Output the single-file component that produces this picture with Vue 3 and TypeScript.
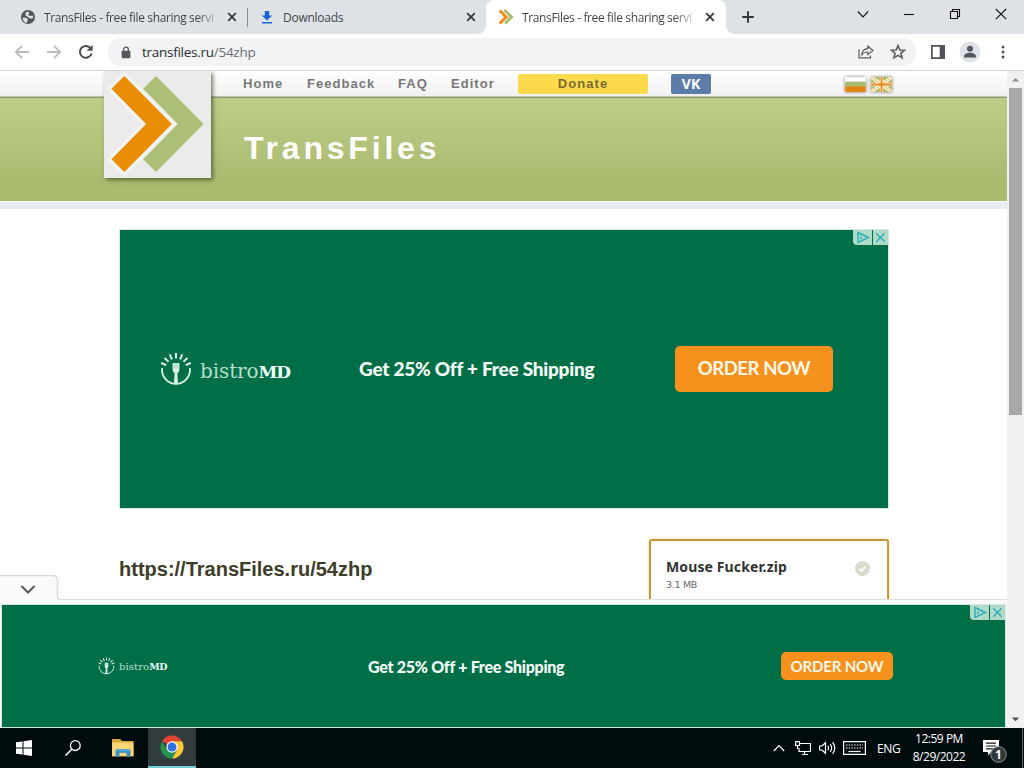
<script setup lang="ts">
interface Tab {
  title: string
  icon: 'globe' | 'download' | 'trans'
  kind: string
}

const tabs: Tab[] = [
  { title: 'TransFiles - free file sharing servi', icon: 'globe', kind: 'first' },
  { title: 'Downloads', icon: 'download', kind: 'second' },
  { title: 'TransFiles - free file sharing servi', icon: 'trans', kind: 'active' },
]

const ads = [
  { id: 'large', text: 'Get 25% Off + Free Shipping' },
  { id: 'small', text: 'Get 25% Off + Free Shipping' },
]

const rays = [-68, -46, -23, 0, 23, 46, 68]
</script>

<template>
  <div class="screen">
    <header class="tabstrip">
      <div v-for="(tab, i) in tabs" :key="i" class="tab" :class="tab.kind">
        <svg v-if="tab.icon === 'globe'" class="fav" viewBox="0 0 16 16">
          <circle cx="8" cy="8" r="7" fill="#505559" />
          <path d="M2.6 8.4 6 8.8 8 10.4 7.2 12.2 7 14C4.400 13.500 2.600 11.500 2.600 8.400Z M5.600 3.600 8.500 2.600 9.300 4 8.200 5.600 9.800 7 12.400 6.600 13.600 8.500 11.500 9.800 9 8.900 7 7.200 5.400 6.500Z" fill="#dee1e6" />
        </svg>
        <svg v-else-if="tab.icon === 'download'" class="fav" viewBox="0 0 16 16">
          <path d="M5.800 2h4.400v4.500H13.200L8 11.500 2.800 6.500h3zM3 13h10v1.500H3z" fill="#1a66d8" />
        </svg>
        <svg v-else class="fav" viewBox="0 0 16 16">
          <path d="M6 .6 8 .6 15.800 8 8 15.400 6 13.500 11.500 8 6 2.500z" fill="#a9bf70" />
          <path d="M.6 2.600 2.800.6 10.300 8 2.800 15.400.6 13.400 6 8z" fill="#f08a1c" />
        </svg>
        <span class="tab-title" :class="{ fade: tab.kind !== 'second' }">{{ tab.title }}</span>
        <svg class="close" viewBox="0 0 10 10"><path d="M1.200 1.200 8.800 8.800M8.800 1.200 1.200 8.800" /></svg>
      </div>
      <svg class="plus" viewBox="0 0 14 14"><path d="M7 1.200v11.600M1.200 7h11.600" /></svg>
      <div class="winctl">
        <svg viewBox="0 0 12 12"><path d="M.8 3.500 6 9l5.200-5.500" /></svg>
        <svg viewBox="0 0 12 12"><path d="M1 6.500h10" /></svg>
        <svg viewBox="0 0 12 12"><path d="M1.500 3.500h7v7h-7zM3.500 3.500v-2h7v7h-2" /></svg>
        <svg viewBox="0 0 12 12"><path d="M.8 1 11.200 11.200M11.200 1 .8 11.200" /></svg>
      </div>
    </header>

    <div class="toolbar">
      <svg class="nav" viewBox="0 0 16 16"><path d="M15 8H2M8 1.800 1.800 8 8 14.200" /></svg>
      <svg class="nav" viewBox="0 0 16 16"><path d="M1 8h13M8 1.800 14.200 8 8 14.200" /></svg>
      <svg class="nav reload" viewBox="0 0 16 16">
        <path d="M13.500 9.500A5.900 5.900 0 1 1 12.300 4" /><path class="solid" d="M14.600.8v6H8.600z" />
      </svg>
      <div class="omnibox">
        <svg class="lock" viewBox="0 0 10 13">
          <path d="M2.600 5.500V3.600a2.400 2.400 0 0 1 4.800 0v1.900" fill="none" stroke="#54585c" stroke-width="1.300" />
          <rect x=".6" y="4.700" width="8.800" height="7.600" rx="1" fill="#54585c" />
        </svg>
        <span class="url">transfiles.ru<span class="path">/54zhp</span></span>
        <svg class="share" viewBox="0 0 16 16">
          <path d="M1 5.200V13.800H12.500V11.500M3.800 10.600C4.200 6.800 6.500 4.800 9.800 4.700V2L15 6.500 9.800 10.600V8C7.200 7.900 5.300 8.800 3.800 10.600Z" />
        </svg>
        <svg class="star" viewBox="0 0 16 16">
          <path d="M8 1.600 9.800 6 14.500 6.300 10.900 9.300 12.100 13.900 8 11.400 3.900 13.900 5.100 9.300 1.500 6.300 6.200 6Z" />
        </svg>
      </div>
      <svg class="panel" viewBox="0 0 14 14"><path d="M0 0h14v14H0zM1.700 1.700v10.600h7V1.700z" fill-rule="evenodd" /></svg>
      <svg class="avatar" viewBox="0 0 22 22">
        <circle cx="11" cy="11" r="10.500" fill="#dfe3e8" />
        <circle cx="11" cy="7.800" r="3" fill="#50565d" />
        <path d="M5 16.500v-1.200c0-2.200 3.500-3.500 6-3.500s6 1.300 6 3.500v1.200z" fill="#50565d" />
      </svg>
      <svg class="dots" viewBox="0 0 4 14"><circle cx="2" cy="2" r="1.500" /><circle cx="2" cy="7" r="1.500" /><circle cx="2" cy="12" r="1.500" /></svg>
    </div>

    <div class="body">
      <main class="page">
        <nav class="menu">
          <a class="m-home">Home</a><a class="m-feed">Feedback</a><a class="m-faq">FAQ</a><a class="m-edit">Editor</a>
          <a class="donate">Donate</a>
          <a class="vk">VK</a>
          <svg class="flag ru" viewBox="0 0 22 16"><rect width="22" height="5.500" fill="#fff" /><rect y="5" width="22" height="5.500" fill="#a9b96c" /><rect y="10" width="22" height="6" fill="#e28412" /></svg>
          <svg class="flag" viewBox="0 0 22 16">
            <rect width="22" height="16" fill="#abb965" />
            <path d="M0 0 22 16M22 0 0 16M11 0V16M0 8H22" stroke="#fff4d8" stroke-width="3.600" />
            <path d="M0 0 22 16M22 0 0 16" stroke="#d9a04d" stroke-width=".8" />
            <path d="M11 0V16M0 8H22" stroke="#e78a20" stroke-width="1.900" />
          </svg>
        </nav>
        <div class="banner"><h1>TransFiles</h1></div>
        <div class="logo">
          <svg viewBox="0 0 107 107">
            <path d="M39 18 52 5 100 53.500 52 102 39 89 74 53.500z" fill="#adbf75" />
            <path d="M7 18 20 5 68 53.500 20 102 7 89 42 53.500z" fill="#f2f2ef" stroke="#f2f2ef" stroke-width="7" />
            <path d="M7 18 20 5 68 53.500 20 102 7 89 42 53.500z" fill="#e98d04" />
          </svg>
        </div>
        <div class="content">
          <h2>https://TransFiles.ru/54zhp</h2>
          <div class="file">
            <div>
              <div class="file-name">Mouse Fucker.zip</div>
              <div class="file-size">3.1 MB</div>
            </div>
            <svg viewBox="0 0 14 14"><circle cx="7" cy="7" r="7" fill="#d9dbca" /><path d="m4.200 7.200 2 2.100L10 5" fill="none" stroke="#fff" stroke-width="1.700" /></svg>
          </div>
        </div>
        <div class="anchor-bar">
          <svg viewBox="0 0 60 26">
            <path d="M0 26V.5H52.500Q57.500.5 57.500 5.500V21Q57.500 24.500 60 24.500V26z" fill="#fafafa" />
            <path d="M0 .5H52.500Q57.500.5 57.500 5.500V21Q57.500 24.500 60 24.500" fill="none" stroke="#d9d9da" stroke-width="1.400" />
            <path d="M21.500 11 28 17.500 34.500 11" fill="none" stroke="#555" stroke-width="2" />
          </svg>
        </div>
        <section v-for="ad in ads" :key="ad.id" class="ad" :class="ad.id">
          <div class="brand">
            <svg viewBox="0 0 32 34">
              <path d="M2.100 16.200A14 14 0 1 0 29.900 16.200" fill="none" stroke="#d9f3e5" stroke-width="1.800" />
              <path v-for="r in rays" :key="r" d="M16 1V6.500" :transform="`rotate(${r} 16 17)`" stroke="#e8faef" stroke-width="2" />
              <path d="M12.600 11h6.800v6.500q0 2.500-2 3.700L18 32h-4l.6-10.800q-2-1.200-2-3.700z" fill="#d9f3e5" />
              <path d="M14.900 11v5.500M17.100 11v5.500" stroke="#6fae94" stroke-width=".6" />
            </svg>
            <span class="word">bistro</span><span class="md">MD</span>
          </div>
          <div class="offer">{{ ad.text }}</div>
          <div class="cta">ORDER NOW</div>
          <div class="choices">
            <svg viewBox="0 0 19 15"><path d="M5 2.500 15.500 7.500 5 12.500z" /><path d="M8 6.200v3M8.200 5.200v.1" /></svg>
            <svg viewBox="0 0 15 15"><path d="m3.300 3.300 8.400 8.400M11.700 3.300l-8.400 8.400" /></svg>
          </div>
        </section>
      </main>
      <aside class="scroll">
        <svg viewBox="0 0 17 17"><path d="M5 10.500 8.500 7 12 10.500z" fill="#8b8b8b" /></svg>
        <i class="thumb"></i>
        <svg viewBox="0 0 17 17"><path d="M4.800 6.500h7.400L8.500 10.300z" fill="#505050" /></svg>
      </aside>
    </div>

    <footer class="taskbar">
      <div class="task start"><svg class="win" viewBox="0 0 16 16"><path d="M0 2.300 6.500 1.400V7.500H0zM7.500 1.200 16 0V7.500H7.500zM0 8.500H6.500V14.600L0 13.700zM7.500 8.500H16V16L7.500 14.800z" fill="#fff" /></svg></div>
      <div class="task"><svg class="search" viewBox="0 0 16 16"><circle cx="10.300" cy="5.600" r="4.900" fill="none" stroke="#fff" stroke-width="1.300" /><path d="M6.800 9.200.5 15.500" stroke="#fff" stroke-width="1.500" /></svg></div>
      <div class="task explorer">
        <svg viewBox="0 0 22 20">
          <path d="M0 1h8l2 2h11.500v15.500H0z" fill="#dba83c" /><path d="M0 4.500h21.500v13.500H0z" fill="#f7d673" />
          <path d="M3.500 18.700v-6.200q0-1.500 1.500-1.500h12q1.500 0 1.500 1.500v6.200h-4v-3.900h-7v3.900z" fill="#3e8fc5" /><path d="M4 11.500h14v1.500H4z" fill="#5aaed8" />
        </svg>
      </div>
      <div class="task chrome">
        <svg viewBox="0 0 24 24">
          <path d="M12 12 2.040 6.250A11.500 11.500 0 0 1 21.960 6.250L12 6.250z" fill="#e24436" />
          <path d="M12 12V6.250H21.960A11.500 11.500 0 0 1 12 23.500L17 14.900z" fill="#fcc934" />
          <path d="M12 12 17 14.900 12 23.500A11.500 11.500 0 0 1 2.040 6.250L7 14.900z" fill="#229450" />
          <circle cx="12" cy="12" r="5.700" fill="#fff" /><circle cx="12" cy="12" r="4.500" fill="#2d72e2" />
        </svg>
      </div>
      <div class="tray">
        <svg class="t-up" viewBox="0 0 12 8"><path d="M.8 7 6 1.500 11.200 7" /></svg>
        <svg class="t-net" viewBox="0 0 16 14"><path d="M5 2.500H15.500V10.500H4V7M7 13.500H13M9.500 10.500V13.500M.7.700H4.500V4.500H.7zM2.500 4.500V8" /></svg>
        <svg class="t-vol" viewBox="0 0 17 14"><path d="M.6 5H3L6.500 1.700V12.300L3 9H.6zM8.800 4.800q1.500 2.200 0 4.400M11.200 3q2.900 4 0 8M13.600 1.200q4.300 5.800 0 11.600" /></svg>
        <svg class="t-kb" viewBox="0 0 23 14"><path d="M.6.600H22.400V13.400H.6z" /><path d="M3 4H20M3 7H20" stroke-dasharray="1.500 1.200" /><path d="M5.500 10.500H17.500" /></svg>
        <span class="lang">ENG</span>
        <div class="clock"><span>12:59 PM</span><span>8/29/2022</span></div>
        <div class="note">
          <svg viewBox="0 0 26 24">
            <path d="M1 1H17V13H9L6 16.500V13H1z" fill="#fff" /><path d="M4 4.200h10M4 7h10M4 9.800h7" stroke="#10181b" stroke-width="1.200" />
            <circle cx="16.500" cy="15.500" r="7.800" fill="#33393b" stroke="#8c9293" />
          </svg>
          <b>1</b>
        </div>
      </div>
    </footer>
  </div>
</template>

<style>
html, body { overflow: hidden; background: #fff; }
</style>

<style scoped>
* { box-sizing: border-box; }
svg { display: block; flex: none; }
.screen { width: 1024px; height: 768px; display: flex; flex-direction: column; overflow: hidden; font-family: "Open Sans", "Noto Sans", sans-serif; background: #fff; }

.tabstrip { height: 34px; flex: none; display: flex; align-items: center; background: #dee1e6; }
.tab { height: 34px; display: flex; align-items: center; font-size: 12px; color: #45494d; }
.tab .fav { width: 16px; height: 16px; }
.tab-title { margin-left: 8px; flex: 1; white-space: nowrap; letter-spacing: -.36px; }
.tab-title.fade { color: transparent; background: linear-gradient(90deg, #3c4043 88%, rgba(60, 64, 67, .15) 100%); -webkit-background-clip: text; background-clip: text; }
.tab .close { width: 10px; height: 10px; fill: none; stroke: #333639; stroke-width: 1.7; margin-left: 10px; }
.first { width: 248px; padding: 0 11px 0 20px; position: relative; }
.first::after { content: ""; position: absolute; right: 0; top: 8px; width: 1px; height: 19px; background: #8a8d92; }
.second { width: 238px; padding: 0 10px 0 11px; }
.second .tab-title { letter-spacing: -.25px; }
.active { width: 240px; height: 34px; padding: 0 11px 0 12px; background: #fff; border-radius: 8px 8px 0 0; position: relative; }
.active::before, .active::after { content: ""; position: absolute; bottom: 0; width: 8px; height: 8px; }
.active::before { left: -8px; background: radial-gradient(circle at 0 0, transparent 7.5px, #fff 8px); }
.active::after { right: -8px; background: radial-gradient(circle at 100% 0, transparent 7.5px, #fff 8px); }
.plus { width: 14px; height: 14px; margin-left: 15px; stroke: #333639; stroke-width: 1.9; }
.winctl { margin-left: auto; display: flex; gap: 34px; padding: 0 17px 6px 0; }
.winctl svg { width: 12px; height: 12px; fill: none; stroke: #111; stroke-width: 1.1; }

.toolbar { height: 37px; flex: none; display: flex; align-items: center; padding: 0 19px 0 14px; border-bottom: 1px solid #d3d4d6; }
.nav { width: 16px; height: 16px; margin-right: 16px; fill: none; stroke: #b9bbbd; stroke-width: 1.8; }
.reload { margin-right: 14px; stroke: #4b4f53; stroke-width: 2; }
.solid { fill: #4b4f53; stroke: none; }
.omnibox { width: 808px; height: 28px; display: flex; align-items: center; border-radius: 14px; background: #f1f3f4; padding: 0 10px 0 13px; }
.lock { width: 10px; height: 13px; }
.url { margin-left: 11px; font-size: 13.500px; letter-spacing: -.27px; color: #2b2e31; flex: 1; }
.path { color: #6a6e73; }
.share, .star { width: 16px; height: 16px; fill: none; stroke: #5a5e62; stroke-width: 1.2; }
.star { margin-left: 16px; stroke-width: 1.6; }
.share { margin-top: -1px; }
.panel { width: 14px; height: 14px; margin-left: 15px; fill: #4f5357; }
.avatar { width: 22px; height: 22px; margin-left: 14px; }
.dots { width: 4px; height: 14px; margin-left: auto; fill: #4f5357; }

.body { height: 657px; flex: none; display: flex; }
.page { width: 1007px; height: 657px; position: relative; overflow: hidden; background: #fff; }
.menu { height: 26px; display: flex; align-items: center; padding: 0 0 1px 243px; background: linear-gradient(#fff, #f1f1f1); font: bold 13px "Liberation Sans", Arial, sans-serif; letter-spacing: 1.05px; color: #777; border-bottom: 1px solid #bdc1b0; }
.menu a { flex: none; }
.m-home { width: 64px; } .m-feed { width: 91px; } .m-faq { width: 53px; } .m-edit { width: 67px; }
.menu .donate { width: 130px; height: 20px; line-height: 20px; margin-top: 1px; text-align: center; background: #fbda4c; color: #796a31; border-radius: 2px; }
.menu .vk { width: 40px; height: 20px; margin: 1px 0 0 23px; line-height: 19px; text-align: center; background: #5d7da8; color: #fff; border-radius: 2px; font-size: 14px; font-family: "Noto Sans", sans-serif; letter-spacing: 0; }
.flag { width: 21px; height: 15px; margin: 2px 0 0 5px; box-shadow: 0 0 3px #777; }
.flag.ru { margin-left: 134px; }
.banner { height: 105px; background: linear-gradient(#bccd87, #aabb70 80%); padding: 30px 0 0 244px; border-top: 1px solid #8f9a70; border-bottom: 1px solid #fbfcf6; }
.banner h1 { margin: 0; font: bold 32px/40px "Liberation Sans", Arial, sans-serif; letter-spacing: 3.8px; color: #fff; }
.banner + .logo { position: absolute; left: 104px; top: 0; width: 107px; height: 107px; background: #ebebeb; box-shadow: 2px 2px 4px rgba(50, 60, 20, .65); }
.logo svg { width: 107px; height: 106px; }
.content { border-top: 7px solid #e8ebed; display: flex; padding: 330px 118px 0 119px; justify-content: space-between; align-items: flex-start; }
.content h2 { margin: 18px 0 0; font: bold 20px/24px "Liberation Sans", Arial, sans-serif; color: #3d3d28; }
.file { width: 240px; height: 80px; border: 2px solid #c5963b; border-radius: 3px; box-shadow: 0 0 3px #f5d77d; padding: 16px 17px 0 15px; display: flex; justify-content: space-between; }
.file svg { width: 15px; height: 15px; margin-top: 4px; }
.file-name { font: bold 14px/20px "Noto Sans", sans-serif; letter-spacing: .12px; color: #333; white-space: nowrap; }
.file-size { font: 9.500px/15px "DejaVu Sans", sans-serif; letter-spacing: -.3px; color: #666; }
.anchor-bar { position: absolute; left: 0; bottom: 0; width: 1007px; height: 129px; background: #fafafa; border-top: 1px solid #dedede; }
.anchor-bar svg { position: absolute; left: 0; top: -25px; width: 60px; height: 26px; }

.ad { position: absolute; background: #006f47; color: #f7fff9; display: grid; align-items: center; font-family: Lato, sans-serif; }
.large { left: 120px; top: 159px; width: 768px; height: 278px; grid-template-columns: 239px 316px 158px; box-shadow: 0 0 0 1px #d4e9df; }
.small { left: 2px; bottom: 1px; width: 1003px; height: 122px; grid-template-columns: 366px 413px 112px; box-shadow: 0 0 0 1px #d4e9df; }
.brand { display: flex; align-items: center; white-space: nowrap; font-family: "DejaVu Serif", serif; color: #b9dccb; }
.large .brand { padding-left: 40px; }
.large .brand svg { width: 32px; height: 34px; }
.large .word { font-size: 20px; letter-spacing: -.1px; line-height: 26px; margin: 3px 0 0 8px; }
.md { font-weight: bold; font-size: 17px; letter-spacing: -1px; margin-top: 5px; color: #effff6; }
.small .brand { padding-left: 96px; }
.small .brand svg { width: 17px; height: 18px; }
.small .word { font-size: 10px; letter-spacing: .1px; margin: 1px 0 0 4px; }
.small .md { font-size: 9.500px; margin-top: 1px; letter-spacing: -.5px; }
.offer { font-weight: 900; white-space: nowrap; }
.large .offer { font-size: 19px; letter-spacing: -.24px; padding-bottom: 2px; }
.small .offer { font-size: 16px; letter-spacing: -.27px; }
.cta { display: flex; align-items: center; justify-content: center; background: #f6911e; border-radius: 5px; font-weight: bold; color: #fff8e8; white-space: nowrap; }
.large .cta { height: 46px; font-size: 18.500px; padding-bottom: 3px; letter-spacing: -.4px; }
.small .cta { height: 28px; font-size: 15px; padding-bottom: 1px; letter-spacing: -.15px; }
.choices { position: absolute; right: 0; top: 0; display: flex; gap: 1px; }
.choices svg { width: 15px; height: 15px; background: #b2dac8; fill: none; stroke: #27aebb; stroke-width: 1.4; }
.choices svg:first-child { width: 19px; border-radius: 0 0 0 4px; }

.scroll { width: 17px; height: 657px; background: #f1f1f1; display: flex; flex-direction: column; }
.scroll svg { width: 17px; height: 17px; }
.thumb { width: 13px; height: 327px; margin: 0 2px auto; background: #a8a8a8; }

.taskbar { height: 40px; flex: none; background: #000b0d; display: flex; color: #fff; }
.task { width: 49px; display: flex; align-items: center; justify-content: center; }
.win, .search { width: 16px; height: 16px; }
.task.start { width: 48px; }
.explorer svg { width: 22px; height: 20px; }
.task.explorer { width: 51px; }
.task.chrome { width: 48px; background: #343d3e; border-bottom: 2px solid #76cfd5; }
.chrome svg { width: 24px; height: 24px; }
.tray { margin-left: auto; display: flex; align-items: center; width: 251px; }
.tray > svg { fill: none; stroke: #fff; stroke-width: 1.2; }
.tray::after { content: ""; width: 1px; height: 40px; background: #59656a; margin-left: 14px; }
.t-up { width: 12px; height: 8px; }
.t-net { width: 16px; height: 14px; margin-left: 10px; }
.t-vol { width: 17px; height: 14px; margin-left: 8px; }
.t-kb { width: 23px; height: 14px; margin-left: 7px; }
.lang { width: 23px; margin-left: 11px; font-size: 12px; letter-spacing: -.4px; }
.clock { width: 56px; margin-left: 11px; display: flex; flex-direction: column; align-items: center; font-size: 12px; line-height: 18px; letter-spacing: -.48px; white-space: nowrap; }
.note { width: 26px; height: 24px; margin: 6px 0 0 15px; position: relative; }
.note svg { width: 26px; height: 24px; }
.note b { position: absolute; left: 9px; top: 7px; width: 15px; text-align: center; font-size: 12px; line-height: 17px; }
</style>
